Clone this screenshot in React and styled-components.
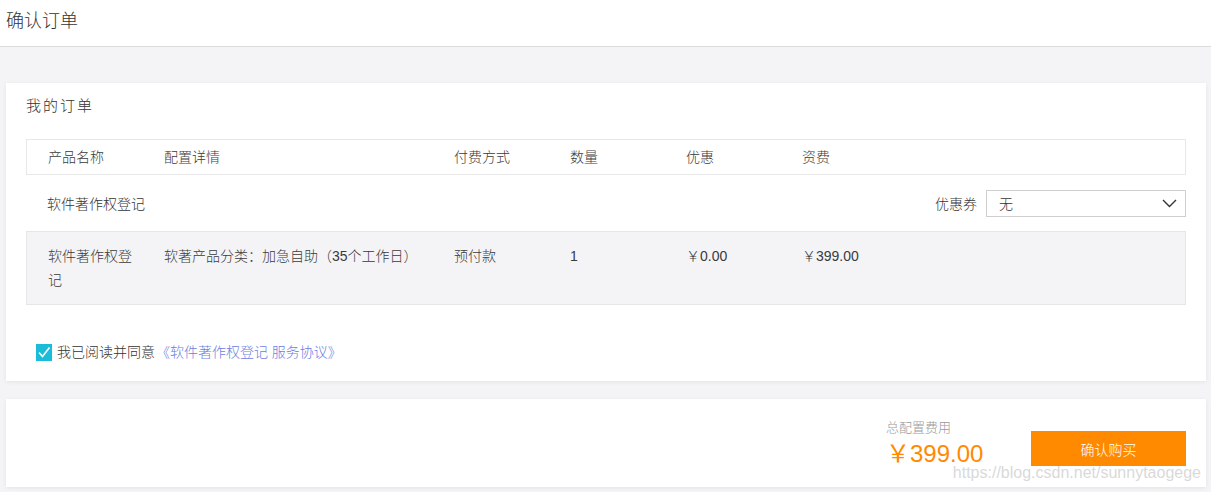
import styled, { createGlobalStyle } from "styled-components";

const GlobalStyle = createGlobalStyle`
  html, body {
    margin: 0;
    padding: 0;
    background: #f4f4f6;
    font-family: "Liberation Sans", "Noto Sans CJK SC", sans-serif;
    color: #333;
  }
`;

const Page = styled.div`
  min-height: 492px;
  background: #f4f4f6;
`;

const Header = styled.header`
  height: 46px;
  line-height: 42px;
  padding-left: 6px;
  background: #fff;
  border-bottom: 1px solid #dcdcdc;
  font-size: 18px;
  font-weight: 300;
  color: #333;
`;

const Main = styled.main`
  padding: 36px 5px 5px 6px;
  display: flex;
  flex-direction: column;
  gap: 18px;
`;

const Card = styled.section`
  background: #fff;
  box-shadow: 0 1px 4px rgba(0, 0, 0, 0.07);
  padding: 0 20px;
`;

const CardTitle = styled.h2`
  margin: 0;
  padding: 12px 0 22px;
  line-height: 22px;
  font-size: 15px;
  font-weight: 300;
  letter-spacing: 2px;
  color: #333;
`;

const Grid = styled.div`
  display: grid;
  grid-template-columns: 116px 290px 116px 116px 116px 1fr;
  padding-left: 21px;
  font-size: 14px;
  font-weight: 300;
  color: #3a3a3a;
`;

const Cell = styled.span`
  padding-right: 20px;
`;

const HeadRow = styled(Grid)`
  height: 34px;
  line-height: 34px;
  border: 1px solid #e8e8e8;
`;

const DataRow = styled(Grid)`
  padding-top: 12px;
  padding-bottom: 12px;
  line-height: 24px;
  background: #f4f4f6;
  border: 1px solid #e6e6e6;
`;

const ProductBar = styled.div`
  height: 56px;
  display: flex;
  align-items: center;
  justify-content: space-between;
  padding-left: 21px;
  font-size: 14px;
  font-weight: 300;
  color: #333;
`;

const Coupon = styled.label`
  display: flex;
  align-items: center;
  gap: 9px;
`;

const Select = styled.div`
  display: flex;
  align-items: center;
  justify-content: space-between;
  padding: 0 8px 0 12px;
  box-sizing: border-box;
  width: 200px;
  height: 27px;
  border: 1px solid #cfcfcf;
  background: #fff;
`;

const Agree = styled.div`
  display: flex;
  align-items: center;
  gap: 5px;
  padding: 39px 0 20px 10px;
  font-size: 14px;
  font-weight: 300;
  line-height: 17px;
  color: #333;
`;

const Protocol = styled.a`
  color: #6b80e3;
  text-decoration: none;
  margin-left: -3px;
`;

const Footer = styled(Card)`
  position: relative;
  height: 88px;
  box-sizing: border-box;
  display: flex;
  justify-content: flex-end;
  align-items: flex-start;
  padding-top: 19px;
  gap: 48px;
`;

const Total = styled.div`
  display: flex;
  flex-direction: column;
  width: 97px;
`;

const TotalLabel = styled.span`
  font-size: 13px;
  font-weight: 300;
  line-height: 20px;
  color: #999;
`;

const TotalPrice = styled.span`
  font-size: 24px;
  line-height: 32px;
  color: #ff8a00;
  white-space: nowrap;
`;

const BuyButton = styled.button`
  margin-top: 13px;
  width: 155px;
  height: 35px;
  border: none;
  background: #ff8a00;
  color: #fff;
  font-family: inherit;
  font-size: 14px;
  font-weight: 300;
  cursor: pointer;
`;

const Watermark = styled.span`
  position: absolute;
  right: 5px;
  bottom: 5px;
  font-size: 16px;
  color: rgba(200, 200, 200, 0.7);
  pointer-events: none;
`;

function Check() {
  return (
    <svg width="16" height="17" viewBox="0 0 16 17">
      <rect width="16" height="17" fill="#1bbcd8" />
      <polyline points="3,8.5 6.5,12.5 13.5,3.5" fill="none" stroke="#fff" strokeWidth="1.6" />
    </svg>
  );
}

function Chevron() {
  return (
    <svg width="15" height="9" viewBox="0 0 15 9">
      <polyline points="1,1 7.5,7.5 14,1" fill="none" stroke="#333" strokeWidth="1.4" />
    </svg>
  );
}

const columns = ["产品名称", "配置详情", "付费方式", "数量", "优惠", "资费"];
const row = ["软件著作权登记", "软著产品分类：加急自助（35个工作日）", "预付款", "1", "￥0.00", "￥399.00"];

export default function App() {
  return (
    <Page>
      <GlobalStyle />
      <Header>确认订单</Header>
      <Main>
        <Card>
          <CardTitle>我的订单</CardTitle>
          <HeadRow>
            {columns.map((c) => (
              <Cell key={c}>{c}</Cell>
            ))}
          </HeadRow>
          <ProductBar>
            <span>软件著作权登记</span>
            <Coupon>
              优惠券
              <Select>
                <span>无</span>
                <Chevron />
              </Select>
            </Coupon>
          </ProductBar>
          <DataRow>
            {row.map((c, i) => (
              <Cell key={i}>{c}</Cell>
            ))}
          </DataRow>
          <Agree>
            <Check />
            <span>
              我已阅读并同意 <Protocol href="#">《软件著作权登记 服务协议》</Protocol>
            </span>
          </Agree>
        </Card>
        <Footer>
          <Total>
            <TotalLabel>总配置费用</TotalLabel>
            <TotalPrice>￥399.00</TotalPrice>
          </Total>
          <BuyButton>确认购买</BuyButton>
          <Watermark>https://blog.csdn.net/sunnytaogege</Watermark>
        </Footer>
      </Main>
    </Page>
  );
}
